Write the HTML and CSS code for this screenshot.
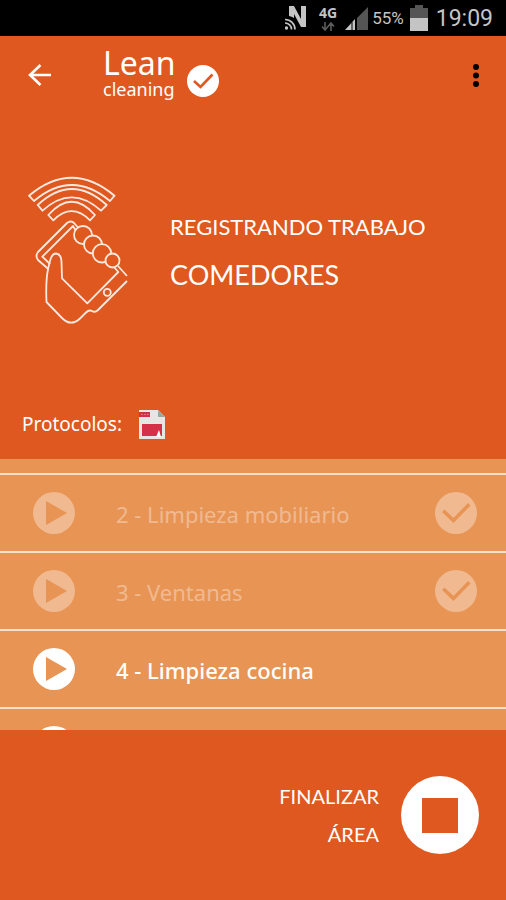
FILE: index.html
```html
<!DOCTYPE html>
<html lang="es">
<head>
<meta charset="utf-8">
<meta name="viewport" content="width=device-width, initial-scale=1">
<title>Lean cleaning</title>
<link rel="stylesheet" href="styles.css">
</head>
<body>
<svg class="defs" aria-hidden="true">
  <symbol id="play" viewBox="0 0 42 42"><path fill="currentColor" fill-rule="evenodd" d="M21 0a21 21 0 1 0 0 42a21 21 0 1 0 0-42zM13 9l21 12l-21 12z"/></symbol>
  <symbol id="check" viewBox="0 0 42 42"><path fill="currentColor" fill-rule="evenodd" d="M21 0a21 21 0 1 0 0 42a21 21 0 1 0 0-42zM7 20l2.500-2.500l9 8.500l14.500-15l2.500 2.500l-17 17.500z"/></symbol>
</svg>
<div class="app">
  <div class="status">
    <svg class="nfc" viewBox="0 0 22 26" aria-hidden="true"><path fill="#c4c4c4" d="M4 1h5l7 13V1h5v21h-5L9 9v4a14 14 0 0 0-5-2z"/><g fill="none" stroke="#c4c4c4" stroke-width="1.7"><path d="M0 14.500a10 10 0 0 1 10 10M0 18a6.500 6.500 0 0 1 6.500 6.500"/></g><circle cx="1.500" cy="23" r="1.700" fill="#c4c4c4"/></svg>
    <span class="net">4G<svg viewBox="0 0 14 9" aria-hidden="true"><path fill="none" stroke="#5c5c5c" stroke-width="1.600" d="M4 0v7M1 4.500L4 8l3-3.500M10 9V2M7 4.500L10 1l3 3.500"/></svg></span>
    <svg class="signal" viewBox="0 0 23 23" aria-hidden="true"><path fill="#555" d="M12 11L23 0v23H12z"/><path fill="#c4c4c4" d="M0 23L10 12v11z"/><path d="M7 15v8" stroke="#000"/></svg>
    <span class="percent">55%</span>
    <svg class="battery" viewBox="0 0 18 26" aria-hidden="true"><path fill="#555" d="M0 3h5V0h8v3h5v10H0z"/><path fill="#c4c4c4" d="M0 13h18v13H0z"/></svg>
    <time class="clock">19:09</time>
  </div>

  <header class="bar">
    <button class="icon-button" aria-label="Volver"><svg class="back" viewBox="0 0 24 22"><path fill="none" stroke="#fff" stroke-width="2.600" d="M23 11H3M12.500 1L2 11l10.500 10"/></svg></button>
    <div class="brand">
      <div class="brand-name"><span class="lean">Lean</span><span class="cleaning">cleaning</span></div>
      <svg class="brand-check" aria-hidden="true" viewBox="0 0 32 32"><circle cx="16" cy="16" r="16" fill="#fff"/><path d="M7 16l6.500 6L25.500 9.500" fill="none" stroke="#de5820" stroke-width="2.600"/></svg>
    </div>
    <button class="icon-button menu" aria-label="Más opciones"><svg class="dots" viewBox="0 0 6 23"><circle cx="3" cy="3" r="3"/><circle cx="3" cy="11.500" r="3"/><circle cx="3" cy="20" r="3"/></svg></button>
  </header>

  <main class="main">
    <section class="hero">
      <svg class="phone" viewBox="28 176 100 150" fill="none" stroke="#fde9df" stroke-width="1.800" stroke-linejoin="round" aria-hidden="true">
        <path d="M29 195.700Q71.700 159.700 114.500 195.700L110 201Q71.700 169 34 201z"/>
        <path d="M37.700 205Q71.700 173 106.700 205L101 210.700Q71.700 184 42.500 210.700z"/>
        <path d="M48.300 215Q71.700 188.500 95 215L90 220.300Q71.700 202 53.300 220.300z"/>
        <path d="M79 228.500L74 223Q71 220 67 223L38 252Q35 256 38 260L48.300 269"/>
        <path d="M76 231L73 226L42.300 256.700L50 264"/>
        <path d="M48.300 268C50 261 51 253.500 56 253.500C60 254 61.500 258 61.500 262L62 278.300L87.300 303.300L118.300 272L114 267"/>
        <path d="M48.300 268Q45.500 280 46.500 302L62 318Q71 327 80 318.500L86 312.500Q89 309.500 92 311Q95 313 98 310L127 281M118 266L127 276"/>
        <circle cx="107.300" cy="292.300" r="3.500"/>
        <g fill="#de5820">
          <circle cx="83" cy="235" r="9"/><circle cx="93" cy="244.500" r="9"/><circle cx="102" cy="253.300" r="9.200"/><circle cx="112.500" cy="260.500" r="7"/>
        </g>
      </svg>
      <div class="hero-text"><p class="kicker">REGISTRANDO TRABAJO</p><h1 class="area">COMEDORES</h1></div>
    </section>
    <div class="protocols">
      <span>Protocolos:</span>
      <a href="#protocolos" aria-label="Abrir PDF"><svg class="pdf" viewBox="0 0 26 29"><path fill="#e8e6e4" d="M0 0h19l7 7v22H0z"/><path fill="#9ba99c" d="M19 0v7h7z"/><path fill="#d5304a" d="M0 2h11v5H0zM3 14h20v12H3z"/><path d="M2 4.500h2m1 0h2m1 0h2" stroke="#e0707e"/><path fill="#fff" d="M17 27l3-7l2 7z"/></svg></a>
    </div>
    <ul class="tasks">
      <li class="task done"><button class="round" aria-label="Iniciar tarea 2"><svg><use href="#play"/></svg></button><span class="label">2 - Limpieza mobiliario</span><svg class="state" aria-label="Completada"><use href="#check"/></svg></li>
      <li class="task done"><button class="round" aria-label="Iniciar tarea 3"><svg><use href="#play"/></svg></button><span class="label">3 - Ventanas</span><svg class="state" aria-label="Completada"><use href="#check"/></svg></li>
      <li class="task"><button class="round" aria-label="Iniciar tarea 4"><svg><use href="#play"/></svg></button><span class="label">4 - Limpieza cocina</span></li>
      <li class="task"><button class="round" aria-label="Iniciar tarea siguiente"><svg><use href="#play"/></svg></button></li>
    </ul>
  </main>

  <footer class="footer">
    <label class="finish" for="stop">FINALIZAR<br>ÁREA</label>
    <button class="stop" id="stop"><svg viewBox="0 0 78 78" aria-hidden="true"><circle cx="39" cy="39" r="39" fill="#fff"/><path fill="#de5820" d="M21 22h36v35H21z"/></svg></button>
  </footer>
</div>
</body>
</html>
```
FILE: styles.css
```css
* { box-sizing: border-box; }
body { margin: 0; background: #de5820; color: #fff; font-family: "Noto Sans", "Open Sans", sans-serif; }
button { padding: 0; border: 0; background: none; color: inherit; font: inherit; cursor: pointer; }
svg { display: block; flex: none; }
p, h1, ul { margin: 0; padding: 0; }
.defs { position: absolute; width: 0; height: 0; }
.app { display: flex; flex-direction: column; height: 100vh; overflow: hidden; }

.status { display: flex; flex: none; align-items: center; justify-content: flex-end; height: 36px; padding-right: 13px; background: #000; color: #c4c4c4; font-family: Roboto, sans-serif; }
.nfc { width: 22px; height: 26px; margin-right: 12px; }
.net { display: flex; flex-direction: column; align-items: center; gap: 2px; margin-right: 8px; font: bold 14px/14px "Open Sans", sans-serif; }
.net svg { width: 14px; height: 9px; }
.signal { width: 23px; height: 23px; margin-right: 4px; }
.percent { margin-right: 6px; font-size: 17px; }
.battery { width: 18px; height: 26px; margin-right: 8px; }
.clock { font-size: 23px; }

.bar { display: flex; flex: none; align-items: center; height: 78px; padding: 0 26px 0 28px; }
.icon-button { display: flex; align-items: center; width: 24px; height: 48px; }
.back { width: 24px; height: 22px; }
.brand { display: flex; align-items: center; gap: 11px; margin-left: 51px; }
.brand-name { display: flex; flex-direction: column; }
.lean { font-size: 32px; line-height: 28px; }
.cleaning { font-size: 18px; line-height: 24px; }
.brand-check { width: 32px; height: 32px; margin-top: 12px; }
.menu { justify-content: flex-end; margin-left: auto; }
.dots { width: 8px; height: 23px; }

.main { display: flex; flex: 1; flex-direction: column; min-height: 0; }
.hero { display: flex; flex: none; align-items: center; gap: 42px; padding: 62px 28px 0; }
.phone { width: 100px; height: 150px; }
.kicker { font-family: Lato, sans-serif; font-size: 22px; line-height: 48px; }
.area { font-family: Lato, sans-serif; font-weight: 400; font-size: 27px; line-height: 48px; }
.protocols { display: flex; flex: none; align-items: center; gap: 17px; height: 70px; margin-top: 63px; padding: 0 22px; font-size: 19px; }
.pdf { width: 26px; height: 29px; }

.tasks { flex: 1; min-height: 0; padding-top: 14px; overflow: hidden; background: #e89454; list-style: none; }
.task { display: flex; align-items: center; height: 78px; padding: 0 29px 0 33px; border-top: 2px solid #fbe0cb; font-size: 22px; }
.round svg, .state { width: 42px; height: 42px; }
.label { margin-left: 41px; padding-top: 2px; font-weight: 500; }
.state { margin-left: auto; }
.done .label { font-weight: 400; }
.done .round, .done .label, .done .state { opacity: .35; }

.footer { display: flex; flex: none; align-items: center; justify-content: flex-end; gap: 22px; height: 170px; padding-right: 27px; }
.finish { font-family: Lato, sans-serif; font-size: 20px; line-height: 38px; text-align: right; }
.stop svg { width: 78px; height: 78px; }
```
